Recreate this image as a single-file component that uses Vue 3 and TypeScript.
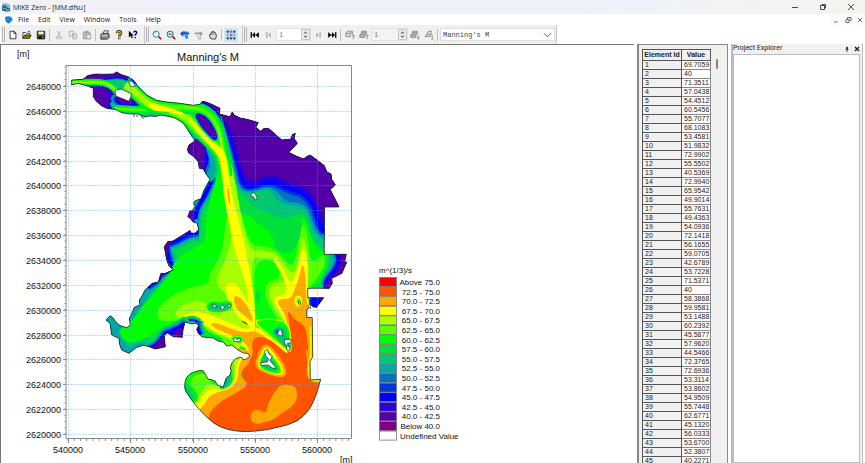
<script setup lang="ts">
import { ref } from 'vue'

interface Contour {
  pts: string
  fill?: string
  rings?: [string, number][]
  dx?: number
  dy?: number
}

const C = {
  red: '#ff0000', verm: '#ff5400', org: '#ffa800', yel: '#ffff00', lime: '#a8ff00', lgrn: '#58ff00',
  grn: '#00ff00', g2: '#00e038', g3: '#00c870', teal: '#00a8a8', sea: '#0070c0', b2: '#0038e0',
  blu: '#0000ff', ind: '#2a00d4', pur: '#5400a8', mag: '#800080',
}

const legend: [string, string][] = [
  [C.red, 'Above 75.0'], [C.verm, '72.5 - 75.0'], [C.org, '70.0 - 72.5'], [C.yel, '67.5 - 70.0'],
  [C.lime, '65.0 - 67.5'], [C.lgrn, '62.5 - 65.0'], [C.grn, '60.0 - 62.5'], [C.g2, '57.5 - 60.0'],
  [C.g3, '55.0 - 57.5'], [C.teal, '52.5 - 55.0'], [C.sea, '50.0 - 52.5'], [C.b2, '47.5 - 50.0'],
  [C.blu, '45.0 - 47.5'], [C.ind, '42.5 - 45.0'], [C.pur, '40.0 - 42.5'], [C.mag, 'Below 40.0'],
  ['#ffffff', 'Undefined Value'],
]

const northings = Array.from({ length: 15 }, (_, i) => ({ label: 2648000 - i * 2000, y: 87 + Math.round(i * 24.85) }))
const eastings = [540000, 545000, 550000, 555000, 560000].map((label, i) => ({ label, x: 68 + Math.round(i * 62.3) }))
const minorY = Array.from({ length: 60 }, (_, i) => 67 + i * 6.22)
const minorX = Array.from({ length: 46 }, (_, i) => 68 + i * 6.23)

const outline = 'M71.7 80L83 79.3 88 75.5 96 74 103 74.3 113 74 116.7 72 121.7 74.7 128 76.7 134 80.7 138.3 86.7 146.7 95 156.7 100.3 167 102 180 103.3 193 105.3 200 104.3 202.3 101.3 206 102 213.3 105 220 108.3 219.3 114 225 115.5 230 116.7 232.3 112 234 115 240 118 246.7 119.3 253 121 258.3 122.7 255.7 127.3 260.7 131.3 264 128.5 268.3 128.3 275 134 281.7 140 290.7 139.3 292.3 134.7 295.3 133.3 294 138.3 297.3 143.3 293 148 288.7 152.3 296 156 303.3 159 307 156.5 310 155 317 160 324.3 165.7 326.7 171.7 331 174 331.7 179.3 335.3 185 333 187 330 189.3 334 197 339 207H324.3V254.3H346.3L344.7 261.7 346.7 262.3 344.7 266.7 342 273.3 336.7 276 331.7 278.3 332.3 283.3 329.3 288.3H307.7V297.7H323.7L320 302.7 316.7 307.3 313.3 307 310 304 309 308 307 309 306.7 317.3 312.3 317.7 312.7 357.3 310 361.7 310.3 380 320.7 379.3Q318 391 313.5 401.5 308 414 296.7 421 287 425.5 280 426.7 268 430 256.7 431 247 431.8 240 431.3 233 431 226.7 429 219 427 213.3 422.7 205 416 198.3 408.3 192 401 188.3 395 184.5 391 184.7 386.7 184.5 381 186.7 377.3 190 373 195 371.7 200 370 203.3 370.7L205 374 208.3 379.3 211 379.5 215 381 217.3 385 223.3 387.3 226 378.3 230 375Q232 371 230.3 367.5 231.5 362 235 359.3 238 357 241.7 357.3L243 359.5 246 359.3 250 356 247.3 353.3 243 353 238 350 231.7 345 226.7 346 223.3 342 218 341 213.3 338 207 337.5 201.7 336.7 198.3 333.3 196.7 329.3 199 325 195 323 192 324 185 322 183 330 182.3 337.3 173.3 336.7 170 334.5 166.7 332.7 164.3 336 165.3 346.7 160 348 155 349 149 346.5 143.3 345.3 136.7 347.3 132 351 129 353.3 121.7 350 119.5 344 119 338.3 111.7 335 110 323.3 106 320 110.3 315.7 113 318 115.7 321.7 120 325.5 126.7 327.7 130.3 325 129.3 318.3 132 313 134.3 307.3 140 305 139.3 300 142 296 145 290 152.3 283.3 158.3 282 161 273.3 165 273.5 169 271.7 173.3 270 169 266 166.7 260 164.3 246.7 167.7 241.7 173 241 180 236.7 190 230.5 191 233 195 233.3 198.7 230 197.3 223.3 192.7 221.7 191 219 187.7 216.7 190 210.7 192 211 195 206.7 193.5 203 195 200.7 201 198.7 204 190 210 179.3 206 174 203.3 169 199.3 168.3 198.3 161.7 193 156 188.3 152.7 187.5 149 189 145 195 140.7 191 135 186.7 128.3 184 124 180 121 175 118 170 116.7 160 115 156 116.5 150 116 144 117 138 114 130 114 121.7 112.7 117 110 113.3 109.3 107 108.5 101.7 106 96 101 93.3 96.7 93.3 88.3 86.7 85.7 78 83.3 71.7 85Z'

// Contour points are digitised at three units per pixel from the sheet origin (60, 60).
const NE = { dx: 330, dy: 90 }
const SO = { dx: 330, dy: 780 }

const contours: Contour[] = [
  // western shoreline
  { pts: '460 350 440 400 410 445 405 490 400 520', rings: [[C.g3, 40], [C.teal, 26], [C.sea, 18], [C.blu, 12]] },
  { pts: '415 510 385 512 350 535 315 545 310 570 325 620 335 630', rings: [[C.g3, 66], [C.teal, 50], [C.sea, 40], [C.b2, 34], [C.blu, 26], [C.ind, 12]] },
  { pts: '335 630 300 645 260 690 240 725 215 755 205 795 185 800 150 765 140 775 155 820 180 830 185 865 210 878 250 855 320 858', rings: [[C.g3, 46], [C.teal, 26]] },
  { pts: '150 760 135 775 150 800 158 830', rings: [[C.teal, 50]] },
  { pts: '335 628 300 640 290 665 262 680', rings: [[C.teal, 30], [C.sea, 22], [C.blu, 14]] },
  { pts: '180 825 180 875 215 880 250 860', rings: [[C.teal, 34]] },
  { pts: '310 540 350 530 325 560 322 600 300 580', fill: C.pur },
  { pts: '298 635 325 630 310 645 298 668', fill: C.pur },
  { pts: '378 450 400 450 402 485 378 488', fill: C.pur, rings: [[C.blu, 6]] },
  // west bank of the upper channel
  { pts: '360 160 400 170 440 230 478 290 474 340 450 375 380 330 340 200', fill: C.g3 },
  { pts: '360 165 395 185 430 235 465 290 466 335 450 368 380 330 340 200', fill: C.teal },
  { pts: '400 235 430 240 448 290 452 320 436 345 440 370 380 330 370 260', fill: C.sea },
  { pts: '400 238 425 240 444 285 448 305 432 335 446 365 380 330 370 250', fill: C.blu },
  { pts: '398 240 425 242 438 270 430 305 436 350 400 340 370 300 370 250', fill: C.pur, rings: [[C.ind, 3]] },
  // central plain
  { pts: '478 300 470 360 445 430 435 500 436 540 415 560 350 590 330 640 290 690 250 735 215 785 180 805 180 825 192 845 235 848 290 812 345 785 395 770 440 800 480 840 560 870 700 870 745 800 745 690 775 670 800 630 806 585 770 570 750 520 738 480 725 470 715 510 702 575 680 580 642 570 638 520 590 490 575 470 545 462 525 430 510 340', fill: C.grn },
  { pts: '486 290 498 400 505 450 492 520 485 585 445 645 448 672 400 680 345 700 300 735 290 765 300 785 345 783 390 772 430 800 470 835 560 870 700 870 745 800 742 690 772 655 798 610 790 580 765 605 750 600 742 520 730 488 718 515 708 600 690 620 660 580 620 556 575 560 550 490 530 410 510 300', fill: C.lgrn },
  { pts: '490 290 505 385 516 450 517 530 500 595 470 650 472 680 500 700 510 760 450 735 410 720 360 738 340 765 365 778 400 775 440 800 480 830 560 870 700 870 745 800 742 690 748 620 738 560 730 525 720 560 712 625 692 645 660 590 620 570 572 575 555 520 540 450 515 300', fill: C.lime },
  // closed low between the channel and the eastern ridge
  { pts: '575 588 610 596 648 592 672 640 672 668 632 672 626 705 650 765 695 800 690 880 660 875 600 815 580 800 575 700', fill: C.lgrn },
  { pts: '583 605 635 598 660 630 658 655 618 668 612 705 640 760 672 800 680 870 640 845 592 805 583 720', fill: C.grn },
  { pts: '588 690 602 690 600 730 588 728', fill: C.g2 },
  { pts: '640 800 655 795 700 800 690 870 660 850', fill: C.g2 },
  // eastern low water
  { pts: '420 118 432 128 468 145 490 185 505 240 540 240 540 150 480 120', fill: C.pur, rings: [[C.g3, 16], [C.teal, 12], [C.sea, 9], [C.blu, 7]] },
  { ...NE, pts: '152 85 186 200 197 300 228 325 245 352 290 362 330 388 365 380 398 366 414 398 424 450 470 484 640 480 640 0 130 0', fill: C.g3 },
  { ...NE, pts: '315 442 322 465 370 485 392 440 398 370 380 400 330 400', fill: C.g2 },
  { ...NE, pts: '155 80 190 220 202 298 240 312 288 296 308 308 330 344 385 346 412 365 430 430 463 455 640 450 640 0 130 0', fill: C.teal },
  { ...NE, pts: '155 80 192 220 205 292 238 308 290 290 322 302 345 337 395 338 418 362 437 427 463 446 640 440 640 0 130 0', fill: C.sea },
  { ...NE, pts: '155 78 195 220 208 288 235 304 290 286 325 294 352 312 395 322 422 355 440 421 463 438 640 430 640 0 130 0', fill: C.b2 },
  { ...NE, pts: '155 75 198 220 211 284 235 300 290 282 325 288 357 304 400 315 427 350 443 417 463 434 640 425 640 0 130 0', fill: C.blu },
  { ...NE, pts: '152 70 202 205 216 265 232 284 265 281 285 266 320 268 360 290 405 302 436 342 450 395 463 407 640 400 640 0 130 0', fill: C.ind },
  { ...NE, pts: '142 70 188 120 206 195 220 255 238 272 263 274 287 254 315 254 340 268 370 282 412 292 442 340 452 372 463 383 640 380 640 0 130 0', fill: C.pur },
  { pts: '800 570 812 600 795 635 775 680 830 710 900 640 880 560', fill: C.g3 },
  { pts: '806 570 820 600 808 630 785 655 790 690 830 710 900 640 880 560', fill: C.teal, rings: [[C.g3, 3]] },
  { pts: '820 570 832 600 815 635 790 660 795 700 830 710 900 640 880 560', fill: C.blu, rings: [[C.sea, 4]] },
  { pts: '836 570 846 605 830 640 800 660 795 700 840 710 900 640 880 560', fill: C.pur, rings: [[C.ind, 3]] },
  { pts: '742 700 820 700 800 760 742 740', fill: C.g3 },
  { pts: '752 712 775 700 830 700 800 760 750 740', fill: C.blu, rings: [[C.teal, 6], [C.sea, 3]] },
  { pts: '778 708 800 700 840 700 800 765 772 745 785 728', fill: C.pur },
  // north-western inlet
  { pts: '20 30 240 30 300 110 400 110 420 150 370 190 300 180 60 180', fill: C.g3 },
  { pts: '50 80 60 50 130 36 175 26 215 40 245 84 228 78 205 55 175 48 110 58', fill: C.pur, rings: [[C.sea, 8], [C.blu, 5], [C.ind, 2]] },
  { pts: '40 82 110 78 140 84 162 96 160 118 140 128 158 155 100 160 60 100', fill: C.pur, rings: [[C.teal, 9], [C.sea, 6], [C.blu, 4]] },
  { pts: '138 88 160 98 150 120 140 112', fill: C.ind },
  { pts: '160 108 205 126 220 100 242 125 228 145 190 140 165 128', fill: C.blu, rings: [[C.teal, 9], [C.sea, 5]] },
  { pts: '165 105 205 124 218 104 225 122 205 138 172 125', fill: C.pur },
  { pts: '210 48 228 64 245 88 270 110', rings: [[C.teal, 24], [C.blu, 12]] },
  // inlet axis
  { pts: '30 67 80 67 130 66 160 82 172 98', rings: [[C.g2, 20], [C.grn, 14], [C.lgrn, 9], [C.lime, 4]] },
  { pts: '165 146 220 150 280 150 320 150', rings: [[C.g2, 24], [C.grn, 14], [C.lgrn, 7]] },
  { pts: '195 76 220 90 245 115 275 138 330 148 385 175 425 222 478 270 493 310 497 350', rings: [[C.g2, 42], [C.grn, 33], [C.lgrn, 25], [C.lime, 16]] },
  { pts: '290 136 350 143 410 142 450 162 472 200 484 240 490 290', rings: [[C.g3, 38], [C.g2, 32], [C.grn, 24], [C.lgrn, 11]] },
  { pts: '380 172 425 222 478 270 493 310 497 350', rings: [[C.lgrn, 25], [C.lime, 17]] },
  { pts: '474 200 482 235 488 280', rings: [[C.lime, 6]] },
  { pts: '405 160 432 168 452 190 470 226 466 242 440 215 420 190', fill: C.pur, rings: [[C.grn, 8], [C.g2, 7], [C.teal, 5], [C.blu, 3]] },
  { pts: '260 124 300 136 345 148 380 162 360 164 320 156 275 152', fill: C.yel },
  { pts: '385 172 405 190 440 232 472 260 486 262 500 290 506 350 517 410 534 475 556 560 566 620 580 690 588 800 572 800 562 690 548 640 530 590 516 530 502 465 490 400 486 330 476 285 440 248 412 216 395 192', fill: C.yel },
  { pts: '500 380 506 382 512 432 506 434', fill: C.org },
  // warm ground
  { pts: '494 690 502 670 530 670 550 705 575 745 590 810 560 795 520 755', fill: C.yel },
  { pts: '366 768 390 758 425 756 470 772 520 792 560 810 586 795 640 838 690 880 720 960 640 960 575 900 548 850 505 830 462 815 425 790 390 772', fill: C.yel },
  { pts: '634 590 650 598 672 630 690 672 702 655 716 612 722 575 734 568 742 600 745 740 757 760 760 990 690 900 682 790 655 750 640 718 650 708 682 702 676 660', fill: C.yel },
  { pts: '446 790 475 790 500 802 555 820 586 810 630 842 688 884 700 960 600 960 570 890 562 850 510 822 470 808', fill: C.org },
  { pts: '520 706 540 710 566 742 584 792 556 770 524 742', fill: C.org },
  { pts: '728 606 736 640 737 700 744 752 758 770 755 1000 680 900 684 800 672 755 650 728 660 716 690 718 704 690 718 650', fill: C.org },
  { pts: '682 752 692 760 702 778 734 795 742 830 747 890 738 935 748 970 830 950 900 1200 430 1200 430 1060 445 1030 490 1018 530 1000 556 975 542 930 552 908 580 890 575 850 584 832 610 830 650 852 680 884 694 870 690 800', fill: C.verm },
  { pts: '704 710 722 706 728 728 716 742 704 732', fill: C.yel, rings: [[C.yel, 1]] },
  { pts: '708 716 722 714 724 730 712 734', fill: C.lgrn },
  { pts: '585 780 600 800 640 832 684 872 692 872 688 800 660 780', fill: C.grn, rings: [[C.yel, 4], [C.lime, 2]] },
  { pts: '640 812 660 798 676 808 674 830 690 840 688 868 660 842', fill: C.g3, rings: [[C.g2, 5]] },
  { pts: '642 815 654 805 658 830', fill: C.sea, rings: [[C.teal, 4]] },
  { pts: '444 740 460 730 480 735 508 730 510 740 485 750 455 748', fill: C.g3, rings: [[C.grn, 8], [C.g2, 5]] },
  { pts: '516 832 545 832 545 846 516 848', fill: C.g2, rings: [[C.lgrn, 6]] },
  { pts: '584 925 590 885 612 848 640 865 682 925 674 956 630 945', fill: C.org },
  { pts: '590 918 600 885 618 855 638 875 675 930 665 948 620 938', fill: C.yel },
  { pts: '596 912 618 865 636 888 666 930 652 942 610 930', fill: C.grn, rings: [[C.lime, 3]] },
  { pts: '600 910 618 872 634 895 655 928 640 934 610 924', fill: C.g3 },
  // southern bank of the tidal flats
  { pts: '420 795 450 820 500 825 545 855 530 880 480 870 400 840', fill: C.lime },
  { pts: '405 780 425 805 460 822 500 832 525 850 510 875 400 850', fill: C.lgrn, rings: [[C.lgrn, 1]] },
  { pts: '395 775 420 800 450 822 490 835 480 865 400 850', fill: C.g2, rings: [[C.grn, 3]] },
  { pts: '412 780 408 800 420 825', rings: [[C.g3, 38], [C.teal, 30], [C.sea, 22], [C.blu, 14]] },
  { pts: '375 785 395 776 418 788', rings: [[C.g2, 24], [C.g3, 16], [C.teal, 11], [C.blu, 6]] },
  { pts: '378 778 360 795 330 808 310 815 290 850 265 858 260 880 380 880', fill: C.blu, rings: [[C.g2, 14], [C.g3, 11], [C.teal, 8], [C.sea, 4]] },
  { pts: '368 795 375 845 330 840 342 815', fill: C.pur },
  { pts: '318 820 318 870 270 870 290 848', fill: C.pur, rings: [[C.ind, 2]] },
  // southern basin
  { ...SO, pts: '245 95 240 128 215 150 212 172 238 192 195 222 150 245 112 285 122 318 0 330 10 130 200 80', fill: C.org },
  { ...SO, pts: '235 95 205 132 204 180 180 208 125 220 104 250 84 276 0 280 10 130 180 90', fill: C.yel },
  { ...SO, pts: '225 95 196 130 196 184 170 207 118 204 98 228 76 256 0 260 10 130 180 90', fill: C.lime },
  { ...SO, pts: '195 110 192 180 165 203 135 192 108 192 92 222 70 246 0 250 10 200 45 200 66 170 110 170 120 140', fill: C.lgrn },
  { ...SO, pts: '30 215 55 205 66 172 92 160 118 168 122 192 170 204 190 172 186 140 120 120 20 130', fill: C.grn },
  { ...SO, pts: '45 185 66 205 84 232 66 250 30 230', fill: C.g2, rings: [[C.grn, 5]] },
  { ...SO, pts: '48 200 64 214 72 232 60 240 38 220', fill: C.g3 },
  { ...SO, pts: '178 160 186 180 170 200 150 205 162 180', fill: C.g3, rings: [[C.g2, 5]] },
  { ...SO, pts: '168 172 176 182 166 200 150 205', fill: C.teal },
  { ...SO, pts: '322 202 345 192 380 200 382 238 366 262 335 278 312 300 285 306 262 314 240 302 245 274 266 268 288 282 294 250', fill: C.org },
  { ...SO, pts: '410 90 418 150 418 180 440 186 460 182', rings: [[C.org, 6]] },
  { ...SO, pts: '424 20 426 110 418 125 419 178 448 181', rings: [[C.yel, 9], [C.lime, 4]] },
]

const islands = [
  'M165 91L183 87 215 102 207 124 168 108ZM206 62L216 64 226 78 212 80Z',
  'M573 403L580 398 588 405 592 418 585 420 581 410 573 408Z',
  'M455 732L462 733 472 741 465 743ZM483 742a5 4 0 1 0 9 0a5 4 0 1 0-9 0M501 737L508 732 512 737 505 741Z',
  'M520 838L526 833 532 839 539 834 542 841 536 845 522 844Z',
  'M715 725L720 724 722 732 717 733ZM652 824L657 810 664 809 668 828Z',
  'M673 838L695 840 693 848 682 850 685 860 691 863 687 874 680 868 681 856 675 854Z',
  'M546 784L555 786 562 793 553 789ZM743 738L751 732 752 746Z',
  'M614 874L622 868 627 882 637 888 630 902 650 925 637 924 625 915 605 916 601 908 622 906 626 898 617 887Z',
]

// Rounds a point list by running quadratic arcs through the segment midpoints.
function smooth(c: Contour): string {
  const n = c.pts.split(' ').map(Number)
  const p: number[][] = []
  for (let i = 0; i < n.length; i += 2) p.push([n[i] + (c.dx ?? 0), n[i + 1] + (c.dy ?? 0)])
  const mid = (a: number[], b: number[]) => `${(a[0] + b[0]) / 2} ${(a[1] + b[1]) / 2}`
  const last = p.length - 1
  if (!c.fill) {
    let d = `M${p[0].join(' ')}`
    for (let i = 1; i < last; i++) d += `Q${p[i].join(' ')} ${mid(p[i], p[i + 1])}`
    return d + `L${p[last].join(' ')}`
  }
  let d = `M${mid(p[last], p[0])}`
  p.forEach((q, i) => { d += `Q${q.join(' ')} ${mid(q, p[(i + 1) % p.length])}` })
  return d + 'Z'
}
const shapes = contours.map(c => ({ ...c, d: smooth(c) }))

const values = ['69.7059', '40', '71.3511', '57.0438', '54.4512', '60.5456', '55.7077', '68.1083', '53.4581', '51.9832', '72.9902', '55.5502', '40.5369', '72.9940', '65.9542', '49.9014', '55.7631', '49.4363', '54.0936', '72.1418', '56.1655', '59.0705', '42.6789', '53.7228', '71.5371', '40', '58.3868', '59.9581', '53.1488', '60.2392', '45.5877', '57.9620', '44.5466', '72.3765', '72.6936', '53.3114', '53.8602', '54.9509', '55.7448', '62.6771', '45.1320', '56.0333', '53.6700', '52.3807', '40.2271']

const menus = ['File', 'Edit', 'View', 'Window', 'Tools', 'Help']
const fileTools = [['new', 'open', 'save'], ['cut', 'copy', 'paste'], ['print', 'help', 'pointer']]
const viewTools = ['zoomin', 'zoomout', 'back', 'forward', 'hand']

const glyphs: Record<string, string> = {
  new: '<path d="M2.500 1.500h5l2 2v7h-7z" fill="#fff" stroke="#222"/><path d="M7 1.500v2.500h2.500" fill="none" stroke="#222"/>',
  open: '<path d="M1 10V3h3l1 1h4v2" fill="#ffffa0" stroke="#333"/><path d="M1 10l2-4h8l-2 4z" fill="#808000" stroke="#222"/><path d="M7 2q2-1 3 1" fill="none" stroke="#222"/>',
  save: '<path d="M1.500 1.500h9v9h-9z" fill="#6b6b14" stroke="#111"/><path d="M3 2h6v3H3z" fill="#f0f0f0"/><path d="M3 7h6v4H3z" fill="#111"/><path d="M7 8h1v2H7z" fill="#fff"/>',
  cut: '<path d="M4 1l3 6M8 1L5 7" stroke="#aaa"/><circle cx="4" cy="9" r="1.500" fill="none" stroke="#aaa"/><circle cx="8" cy="9" r="1.500" fill="none" stroke="#aaa"/>',
  copy: '<path d="M1.500 1.500h5v6h-5zM5.500 4.500h5v6h-5z" fill="#eee" stroke="#aaa"/><path d="M7 6.500h2M7 8.500h2" stroke="#bbb"/>',
  paste: '<path d="M1.500 2.500h8v8h-8z" fill="#bbb" stroke="#999"/><path d="M4 1h3v2H4z" fill="#999"/><path d="M5.500 5.500h5v5h-5z" fill="#eee" stroke="#999"/>',
  print: '<path d="M4 4l1-3h5L9 4" fill="#fff" stroke="#333"/><path d="M1 5l2-1h7l1 1v4l-2 2H1z" fill="#888" stroke="#333"/><path d="M2 7h7" stroke="#eee"/>',
  help: '<path d="M3.500 4q0-2.500 2.500-2.500T8.500 4Q8.500 5.500 6.300 6.800V8M6.300 9v2" fill="none" stroke="#222" stroke-width="2.800"/><path d="M3.500 4q0-2.500 2.500-2.500T8.500 4Q8.500 5.500 6.300 6.800V8M6.300 9v2" fill="none" stroke="#e8e000" stroke-width="1.200"/>',
  pointer: '<path d="M1 1v8l2-2 1.500 3 1.500-1-1.500-2.500H7z" fill="#000"/><path d="M7 3q0-1.500 1.700-1.500T10.500 3Q10.500 4.500 8.700 5.500V7M8.700 8.500V10" fill="none" stroke="#0000a0" stroke-width="1.600"/>',
  zoomin: '<path d="M7.500 7.500l3.500 3.500" stroke="#d00" stroke-width="2"/><circle cx="5" cy="5" r="3.700" fill="#dff" stroke="#456"/><path d="M3 4q1-1.500 2-1.500" stroke="#0cc" fill="none"/>',
  zoomout: '<path d="M7.500 7.500l3.500 3.500" stroke="#d00" stroke-width="2"/><circle cx="5" cy="5" r="3.700" fill="#cee" stroke="#345"/><path d="M3 5h4" stroke="#234"/>',
  back: '<path d="M0 4.500L4 1v2h7v2.500H4V8z" fill="#0050d8"/><path d="M5 5.500h4l1 4-3 1.500z" fill="#08a0e0"/><path d="M4 2.500h5" stroke="#003080"/>',
  forward: '<path d="M11 4.500L7 1.500V3H1v2h6v2.500z" fill="#999"/><path d="M4 6l2 5h2L7 7" fill="none" stroke="#aaa"/>',
  hand: '<path d="M3.500 10.500L1.500 6l1-1 1 1V3l1-.5.8.5V2l1-.5.9.5v1l1-.3.8.6v1.200l.9.500v3l-1 3z" fill="#ddd" stroke="#333"/><path d="M5.300 3v3M7.200 3v3" stroke="#555" stroke-width=".7"/>',
  mesh: '<path d="M2 0v12M6 0v12M10 0v12M0 2h12M0 6h12M0 10h12" stroke="#79a" stroke-width=".8"/><path d="M2 2l4 4 4-4M2 10l4-4 4 4" stroke="#8ac" fill="none" stroke-width=".7"/><path d="M1 1h2v2H1zM9 1h2v2H9zM1 9h2v2H1zM9 9h2v2H9zM5 9h2v2H5z" fill="#234"/><path d="M5 1h2v2H5zM5 5h2v2H5z" fill="#b05080"/>',
  first: '<path d="M1.500 2.500v7" stroke="#000" stroke-width="1.500"/><path d="M6 2.500v7L2.500 6zM10.500 2.500v7L7 6z" fill="#000"/><path d="M3 6h8" stroke="#000"/>',
  prev: '<path d="M3.500 2.500v7" stroke="#888"/><path d="M8 3v6L5 6z" fill="#aaa"/>',
  next: '<path d="M8.500 2.500v7" stroke="#888"/><path d="M4 3v6L7 6z" fill="#aaa"/>',
  last: '<path d="M10.500 2.500v7" stroke="#000" stroke-width="1.500"/><path d="M6 2.500v7L9.500 6zM1.500 2.500v7L5 6z" fill="#000"/><path d="M1 6h8" stroke="#000"/>',
  layertop: '<path d="M1 4l2-2.500h6L7.500 4zM1 4v4h5.500V4M9 2v3" fill="#ddd" stroke="#888"/><path d="M10 11V6M8.500 7.500L10 5.500l1.500 2" stroke="#888" fill="none"/>',
  layerup: '<path d="M1 6l2-2.500h6L7.500 6zM3 3.500V1.500h6v2M1 6v3h6V6" fill="#bbb" stroke="#888"/><path d="M10 11V6M8.500 7.500L10 5.500l1.500 2" stroke="#888" fill="none"/>',
  layerdown: '<path d="M1 6l2-2.500h6L7.500 6zM3 3.500V1.500h6v2M1 6v3h6V6" fill="#bbb" stroke="#888"/><path d="M10 6v5M8.500 9l1.500 2 1.500-2" stroke="#888" fill="none"/>',
  layerend: '<path d="M1 8l2-2.500h6L7.500 8zM3 5.500L5 1.500h4L8 5" fill="#ddd" stroke="#888"/><path d="M10 6v4M8.500 11h3" stroke="#888" fill="none"/>',
}

const step = ref('1')
const layer = ref('1')
const item = ref("Manning's M")
</script>

<template>
  <div class="window">
    <header class="titlebar">
      <svg class="app-icon" viewBox="0 0 10 10"><path d="M0 1q5-2 9 1v7q-5 1-9-1z" fill="#8fb9ca" /><path d="M0 4q3-3 5 0t4 1v4q-5 1-9-1z" fill="#176a92" /><path d="M1 6q2-1 3 1t4 0" stroke="#fff" fill="none" stroke-width=".7" /></svg>
      <span class="caption">MIKE Zero - [MM.dfsu]</span>
      <div class="win-buttons">
        <button aria-label="Minimize"><svg viewBox="0 0 8 8"><path d="M1 4.500h6" /></svg></button>
        <button aria-label="Restore"><svg viewBox="0 0 8 8"><path d="M1.500 2.500h4v4h-4zM3 2.500v-1h3.500V5h-1" /></svg></button>
        <button aria-label="Close"><svg viewBox="0 0 8 8"><path d="M1 1l6 6M7 1L1 7" /></svg></button>
      </div>
    </header>
    <nav class="menubar">
      <svg class="doc-icon" viewBox="0 0 9 9"><path d="M0 1q3-1 6-.5Q9 2 8.500 4.500L5 8.500Q1 8 .5 5z" fill="#1689de" /></svg>
      <button v-for="m in menus" :key="m">{{ m }}</button>
      <div class="mdi-buttons">
        <button aria-label="Minimize document"><svg viewBox="0 0 8 8"><path d="M2 6h3.500" /></svg></button>
        <button aria-label="Restore document"><svg viewBox="0 0 8 8"><path d="M2 3.500h3v3H2zM3.500 3V1.500H7v3H5.500" /></svg></button>
        <button aria-label="Close document"><svg viewBox="0 0 8 8"><path d="M2 2l4 4M6 2L2 6" /></svg></button>
      </div>
    </nav>

    <div class="toolbars">
      <div class="toolbar">
        <i class="grip" />
        <template v-for="(group, g) in fileTools" :key="g">
          <i v-if="g" class="sep" />
          <button v-for="t in group" :key="t" class="tool" :aria-label="t"><svg viewBox="0 0 12 12" v-html="glyphs[t]" /></button>
        </template>
      </div>
      <div class="toolbar">
        <i class="grip" />
        <button v-for="t in viewTools" :key="t" class="tool" :aria-label="t"><svg viewBox="0 0 12 12" v-html="glyphs[t]" /></button>
        <i class="sep" />
        <button class="tool active" aria-label="mesh"><svg viewBox="0 0 12 12" v-html="glyphs.mesh" /></button>
      </div>
      <div class="toolbar">
        <i class="grip" />
        <button class="tool" aria-label="first"><svg viewBox="0 0 12 12" v-html="glyphs.first" /></button>
        <button class="tool" aria-label="previous"><svg viewBox="0 0 12 12" v-html="glyphs.prev" /></button>
        <div class="spin">
          <input v-model="step" aria-label="Time step">
          <svg viewBox="0 0 9 12"><path d="M4.500 1.500l3 3h-6zM4.500 10.500l3-3h-6z" /></svg>
        </div>
        <button class="tool" aria-label="next"><svg viewBox="0 0 12 12" v-html="glyphs.next" /></button>
        <button class="tool" aria-label="last"><svg viewBox="0 0 12 12" v-html="glyphs.last" /></button>
        <i class="sep" />
        <button class="tool" aria-label="top layer"><svg viewBox="0 0 12 12" v-html="glyphs.layertop" /></button>
        <button class="tool" aria-label="layer up"><svg viewBox="0 0 12 12" v-html="glyphs.layerup" /></button>
        <div class="spin dim">
          <input v-model="layer" aria-label="Layer" disabled>
          <svg viewBox="0 0 9 12"><path d="M4.500 1.500l3 3h-6zM4.500 10.500l3-3h-6z" /></svg>
        </div>
        <button class="tool" aria-label="layer down"><svg viewBox="0 0 12 12" v-html="glyphs.layerdown" /></button>
        <button class="tool" aria-label="bottom layer"><svg viewBox="0 0 12 12" v-html="glyphs.layerend" /></button>
        <i class="sep" />
        <div class="combo">
          <select v-model="item" aria-label="Item"><option>Manning's M</option></select>
          <svg viewBox="0 0 10 6"><path d="M1 1l4 4 4-4" /></svg>
        </div>
      </div>
    </div>

    <main class="workspace">
      <section class="chart">
        <svg viewBox="1 45 633 418" preserveAspectRatio="xMinYMin meet" role="img" aria-label="Manning's M contour map">
          <defs><clipPath id="domain"><path :d="outline" /></clipPath></defs>
          <text x="17" y="57" class="axis">[m]</text>
          <text x="208" y="61" class="heading">Manning's M</text>

          <g clip-path="url(#domain)">
            <path :d="outline" :fill="C.g2" />
            <g transform="translate(60 60) scale(0.33333)">
              <template v-for="(s, i) in shapes" :key="i">
                <path v-for="(r, k) in s.rings ?? []" :key="k" :d="s.d" fill="none" :stroke="r[0]" :stroke-width="s.fill ? r[1] * 2 : r[1]" stroke-linejoin="round" />
                <path v-if="s.fill" :d="s.d" :fill="s.fill" />
              </template>
            </g>
          </g>
          <path :d="outline" class="coast" />
          <path class="coast" d="M134 114v3M141 116l2.500 3M137 115v2" />
          <g transform="translate(60 60) scale(0.33333)">
            <path v-for="d in islands" :key="d" :d="d" class="island" />
          </g>

          <g class="grid">
            <path v-for="n in northings" :key="n.label" :d="`M67 ${n.y - 0.5}H351`" />
            <path v-for="e in eastings" :key="e.label" :d="`M${e.x + 0.5} 66V438`" />
          </g>
          <path class="frame" d="M66 438.500V65.500H351.500V438.500Z" />
          <g class="ticks">
            <path v-for="y in minorY" :key="y" :d="`M64.500 ${y}H66`" />
            <path v-for="x in minorX" :key="x" :d="`M${x} 439V441`" />
            <path v-for="n in northings" :key="n.label" :d="`M63 ${n.y - 0.5}H66`" />
            <path v-for="e in eastings" :key="e.label" :d="`M${e.x + 0.5} 439V443`" />
          </g>
          <text v-for="n in northings" :key="n.label" x="61" :y="n.y + 3" class="axis end">{{ n.label }}</text>
          <text v-for="e in eastings" :key="e.label" :x="e.x" y="453" class="axis mid">{{ e.label }}</text>
          <text x="340" y="463" class="axis">[m]</text>

          <text x="379" y="273" class="key">m^(1/3)/s</text>
          <g v-for="(l, i) in legend" :key="l[1]">
            <rect x="379.500" :y="277.500 + i * 9.600" width="17" height="9" :fill="l[0]" class="swatch" />
            <text :x="i > 15 ? 400 : 440" :y="285 + i * 9.600" class="key" :class="{ end: i < 16 }">{{ l[1] }}</text>
          </g>
        </svg>
      </section>

      <section class="values">
        <table>
          <thead><tr><th>Element Id</th><th>Value</th></tr></thead>
          <tbody>
            <tr v-for="(v, i) in values" :key="i"><th scope="row">{{ i + 1 }}</th><td>{{ v }}</td></tr>
          </tbody>
        </table>
        <div class="scroll"><i /></div>
      </section>

      <aside class="explorer">
        <header>
          <h2>Project Explorer</h2>
          <button aria-label="Pin"><svg viewBox="0 0 8 8"><path d="M2.500 4.500h3M4 4.500V7M3.500 2h1v2h-1z" /></svg></button>
          <button aria-label="Close panel"><svg viewBox="0 0 8 8"><path d="M2 2l4 4M6 2L2 6" stroke-width="1.400" /></svg></button>
        </header>
        <div class="tree" />
      </aside>
    </main>
  </div>
</template>

<style>
body { margin: 0; background: #fff; }
</style>

<style scoped>
* { box-sizing: border-box; }
.window { height: 100vh; display: flex; flex-direction: column; overflow: hidden; font-family: "Open Sans", "Noto Sans", sans-serif; font-size: 7px; color: #222; }
button { border: 0; padding: 0; margin: 0; background: none; font: inherit; color: inherit; display: flex; align-items: center; justify-content: center; }
svg { display: block; }

.titlebar { height: 14px; flex: none; display: flex; align-items: center; gap: 2px; padding-left: 2px; background: linear-gradient(90deg, #f1f2f7, #edf2fc 65%, #f4f4ee); }
.app-icon { width: 9px; height: 9px; }
.win-buttons { margin-left: auto; display: flex; }
.win-buttons button { width: 28px; height: 13px; }
.win-buttons svg, .mdi-buttons svg, .explorer svg { width: 8px; height: 8px; fill: none; stroke: #222; stroke-width: .8; }

.menubar { height: 11px; flex: none; display: flex; align-items: center; gap: 9px; padding-left: 5px; }
.menubar > button { line-height: 11px; }
.doc-icon { width: 8px; height: 8px; margin-right: -4px; }
.mdi-buttons { margin-left: auto; display: flex; gap: 2px; }
.mdi-buttons button { width: 10px; height: 10px; background: #f8f8f8; }
.mdi-buttons svg { stroke: #356; }

.toolbars { height: 19px; flex: none; display: flex; padding-left: 1px; }
.toolbar { display: flex; align-items: center; background: #f0f0f0; border-right: 1px solid #c8c8c8; padding-right: 4px; }
.toolbar:last-child { padding-right: 1px; }
.grip { width: 3px; height: 15px; margin: 0 1px; border: solid #b4b4b4; border-width: 0 1px; }
.sep { width: 1px; height: 12px; margin: 0 2px 0 1px; background: #c0c0c0; }
.tool { width: 14px; height: 14px; }
.tool svg { width: 10px; height: 10px; fill: none; }
.tool.active { background: #cce4f7; }
.spin { width: 35px; height: 13px; display: flex; background: #fff; border: 1px solid #e2e2e2; }
.spin.dim { width: 37px; background: #f3f3f3; }
.spin input { flex: 1; min-width: 0; border: 0; padding: 0 0 0 2px; background: none; color: #777; font: 7px "Liberation Mono", monospace; }
.spin svg { width: 9px; height: 11px; fill: #777; background: #eee; border: 1px solid #c8c8c8; }
.combo { position: relative; width: 115px; height: 13px; }
.combo select { appearance: none; width: 100%; height: 100%; border: 1px solid #ddd; border-radius: 0; background: #fff; padding: 0 2px; color: #444; font: 7px "Liberation Mono", monospace; }
.combo svg { position: absolute; right: 3px; top: 4px; width: 9px; height: 6px; fill: none; stroke: #444; pointer-events: none; }

.workspace { flex: 1; min-height: 0; display: flex; }
.chart { flex: 1; min-width: 0; border: solid #777; border-width: 1px 0 0 1px; overflow: hidden; }
.chart svg { width: 100%; font-family: "Liberation Sans", Arial, sans-serif; fill: #111; overflow: visible; }
.axis { font-size: 9px; }
.heading { font-size: 11px; text-anchor: middle; }
.key { font-size: 8px; }
.end { text-anchor: end; }
.mid { text-anchor: middle; }
.coast { fill: none; stroke: #222; stroke-width: .8; }
.island { fill: #fff; stroke: #222; stroke-width: 2; }
.grid { stroke: #4aa0ee; stroke-opacity: .38; stroke-dasharray: 2 1; fill: none; }
.frame { fill: none; stroke: #888; stroke-width: 1; }
.ticks { stroke: #777; stroke-width: .8; }
.swatch { stroke: #777; stroke-width: .8; }

.values { width: 91px; flex: none; display: flex; gap: 5px; margin-left: 3px; padding: 4px 0 0 3px; background: #f0f0f0; border: solid #888; border-width: 1px 1px 0 2px; overflow: hidden; }
table { width: 69px; height: max-content; table-layout: fixed; border-collapse: separate; border-spacing: 0; border-left: 1px solid #555; border-top: 1px solid #555; font: 7px "Liberation Sans", Arial, sans-serif; background: #fff; }
thead th { height: 11px; padding: 0; line-height: 10px; font-weight: 700; background: #f0f0f0; border: solid #555; border-width: 0 1px 1px 0; white-space: nowrap; }
thead th:first-child { width: 39px; }
tbody th, tbody td { height: 9px; padding: 0 0 0 2px; line-height: 8px; font-weight: 400; text-align: left; border: solid #888; border-width: 0 1px 1px 0; }
tbody th { background: #f0f0f0; border-color: #555; }
.scroll { width: 5px; padding-top: 10px; }
.scroll i { display: block; width: 2px; height: 10px; background: #888; border-radius: 1px; }

.explorer { width: 132px; flex: none; display: flex; flex-direction: column; margin: 0 2px 0 3px; background: #f0f0f0; border: solid #bbb; border-width: 0 1px 0 2px; }
.explorer header { height: 9px; display: flex; align-items: center; gap: 2px; padding-right: 1px; }
.explorer h2 { flex: 1; margin: 0; font: 400 7px/9px Roboto, sans-serif; }
.tree { flex: 1; margin: 1px 2px 0 0; background: #fff; border: 1px solid #bbb; }
</style>
